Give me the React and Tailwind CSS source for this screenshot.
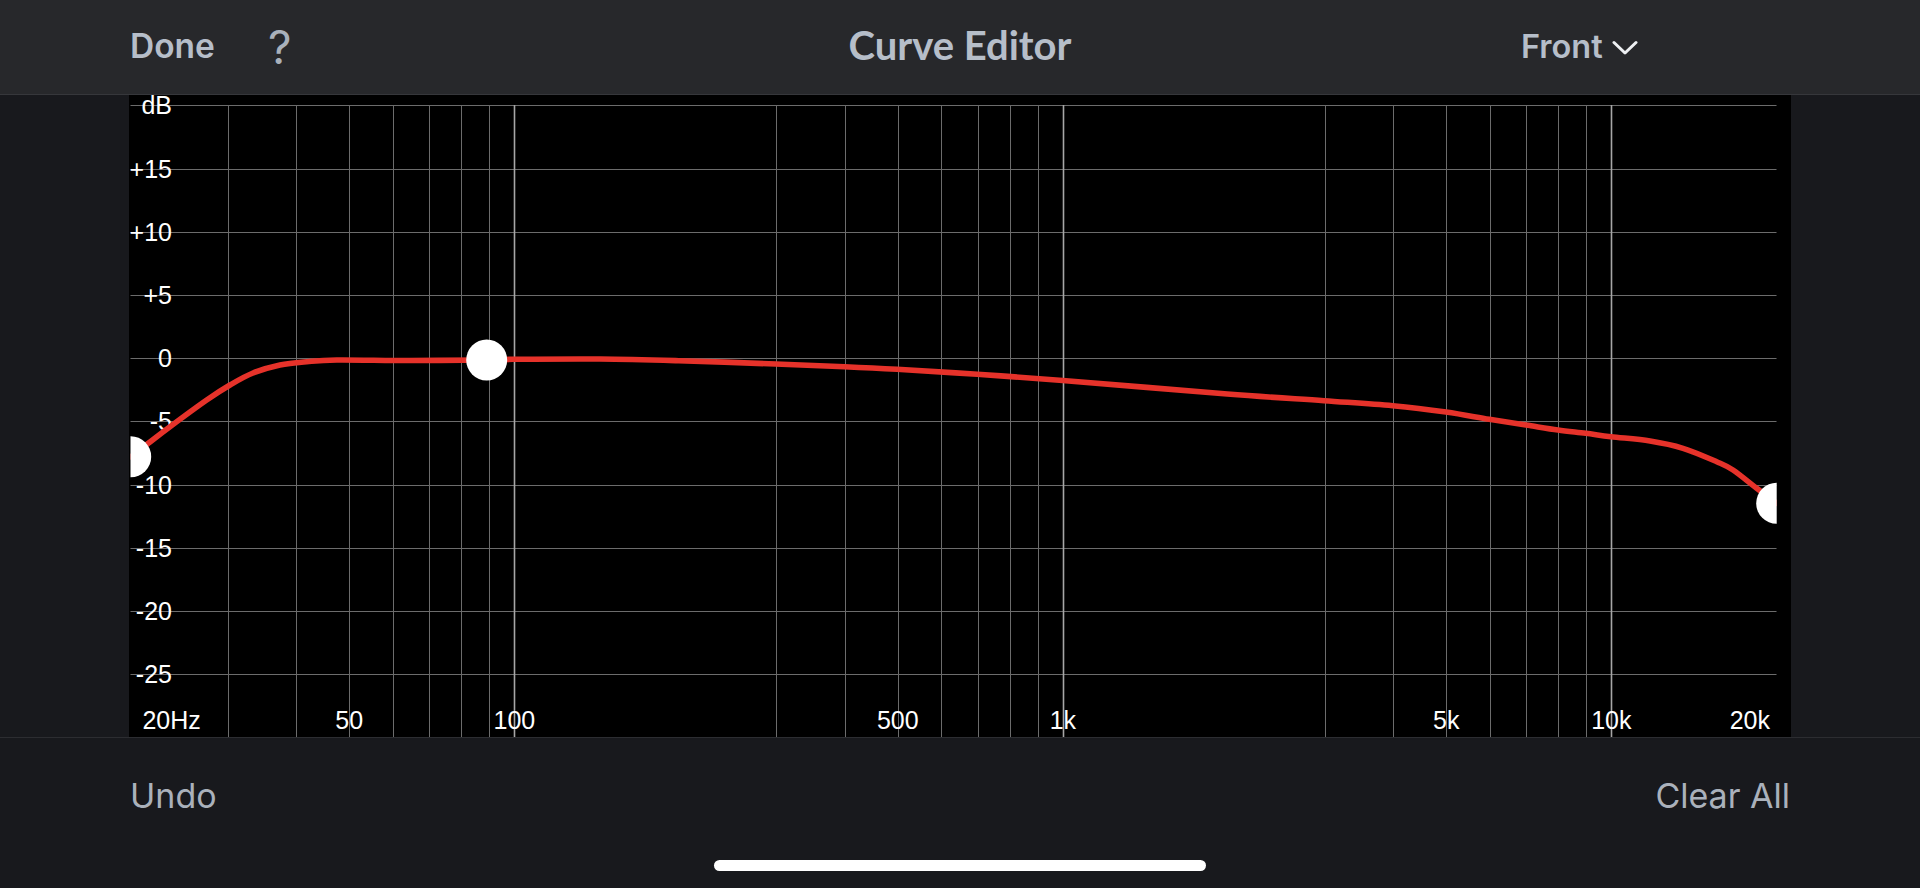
import React from "react";

const W = 1662;
const H = 642;
const fx = (f) => 2 + 548.5 * Math.log10(f / 20);
const dbY = (k) => 10.3 + 63.2 * k;
const dbLabels = ["dB", "+15", "+10", "+5", "0", "-5", "-10", "-15", "-20", "-25"];

const freqs = [];
[10, 100, 1000].forEach((m) => {
  for (let i = 3; i <= 10; i++) {
    freqs.push(i * m);
  }
});
const decades = new Set([100, 1000, 10000]);

const xLabels = [
  { t: "50", f: 50 },
  { t: "100", f: 100 },
  { t: "500", f: 500 },
  { t: "1k", f: 1000 },
  { t: "5k", f: 5000 },
  { t: "10k", f: 10000 },
];

const curve = [
  [2, 361.7],
  [19.3, 348.3],
  [41, 331.7],
  [77.7, 305],
  [101, 290],
  [124, 278],
  [151, 270],
  [177.7, 266.7],
  [207.7, 265],
  [281, 265.5],
  [357.7, 265],
  [384, 264.3],
  [471, 264],
  [549.7, 265.7],
  [646.7, 269],
  [715.7, 271.7],
  [768, 274.3],
  [848.3, 279.3],
  [933.7, 285.5],
  [1098.3, 299],
  [1195, 305.7],
  [1263.7, 310.7],
  [1317, 317],
  [1360.3, 324.3],
  [1397, 330],
  [1429, 335],
  [1456.7, 338.3],
  [1482, 341.7],
  [1521, 346],
  [1554, 353.3],
  [1587.7, 366.7],
  [1604, 375],
  [1627.7, 393.3],
  [1647.7, 408.3],
];

function smoothPath(pts) {
  let d = `M${pts[0][0]},${pts[0][1]}`;
  for (let i = 0; i < pts.length - 1; i++) {
    const p0 = pts[i - 1] || pts[i];
    const p1 = pts[i];
    const p2 = pts[i + 1];
    const p3 = pts[i + 2] || p2;
    const c1x = p1[0] + (p2[0] - p0[0]) / 6;
    const c1y = p1[1] + (p2[1] - p0[1]) / 6;
    const c2x = p2[0] - (p3[0] - p1[0]) / 6;
    const c2y = p2[1] - (p3[1] - p1[1]) / 6;
    d += ` C${c1x.toFixed(2)},${c1y.toFixed(2)} ${c2x.toFixed(2)},${c2y.toFixed(2)} ${p2[0]},${p2[1]}`;
  }
  return d;
}

function Chart() {
  const labelFont = { fontFamily: "'Liberation Sans', Arial, sans-serif", fontSize: 25 };
  return (
    <svg width={W} height={H} viewBox={`0 0 ${W} ${H}`} className="block overflow-visible">
      <defs>
        <clipPath id="plotclip">
          <rect x="1.5" y="0" width="1646.2" height={H} />
        </clipPath>
      </defs>
      {dbLabels.map((_, k) => {
        const y = Math.round(dbY(k)) + 0.5;
        return <line key={"h" + k} x1="1.5" x2="1647.5" y1={y} y2={y} stroke="#6c6c6c" strokeWidth="1" />;
      })}
      {freqs.map((f) => {
        const x = Math.round(fx(f)) + 0.5;
        const dec = decades.has(f);
        return (
          <line
            key={"v" + f}
            x1={x}
            x2={x}
            y1={Math.round(dbY(0))}
            y2={H}
            stroke={dec ? "#a6a6a6" : "#6c6c6c"}
            strokeWidth={dec ? 1.6 : 1}
          />
        );
      })}
      {dbLabels.map((t, k) => (
        <text key={"l" + k} x="43" y={dbY(k) + (k === 0 ? 8.5 : 9)} textAnchor="end" fill="#ffffff" style={labelFont}>
          {t}
        </text>
      ))}
      <text x="13.4" y="634.3" textAnchor="start" fill="#ffffff" style={labelFont}>
        20Hz
      </text>
      {xLabels.map((l) => (
        <text key={l.t} x={fx(l.f)} y="634.3" textAnchor="middle" fill="#ffffff" style={labelFont}>
          {l.t}
        </text>
      ))}
      <text x="1641" y="634.3" textAnchor="end" fill="#ffffff" style={labelFont}>
        20k
      </text>
      <g clipPath="url(#plotclip)">
        <path d={smoothPath(curve)} fill="none" stroke="#e6322a" strokeWidth="5.6" strokeLinecap="round" strokeLinejoin="round" />
        <circle cx="1.7" cy="361.7" r="20.5" fill="#ffffff" />
        <circle cx="357.7" cy="265" r="20.5" fill="#ffffff" />
        <circle cx="1647.7" cy="408.3" r="20.5" fill="#ffffff" />
      </g>
    </svg>
  );
}

export default function App() {
  return (
    <div className="flex h-[888px] w-[1920px] flex-col overflow-hidden bg-[#18191d]">
      <header className="flex h-[95px] shrink-0 items-center border-b border-[#36373b] bg-[#27282b] px-[130px]">
        <div className="flex w-[430px] items-center">
          <span className="font-['Inter',sans-serif] text-[33.5px] font-semibold leading-none text-[#b6bec9]">Done</span>
          <span className="ml-[53px] font-['Inter',sans-serif] text-[46px] font-normal leading-none text-[#a9b1bb]">?</span>
        </div>
        <div className="mb-[4px] flex-1 text-center font-['Lato',sans-serif] text-[40px] font-bold leading-none text-[#b6bec9]">
          Curve Editor
        </div>
        <div className="flex w-[430px] items-center pl-[161px]">
          <span className="font-['Inter',sans-serif] text-[32.5px] font-semibold leading-none text-[#b6bec9]">Front</span>
          <svg width="26" height="16" viewBox="0 0 26 16" className="ml-[9px] mt-[2px]">
            <polyline points="2,2.5 13,13 24,2.5" fill="none" stroke="#eef0f3" strokeWidth="3" strokeLinecap="round" strokeLinejoin="round" />
          </svg>
        </div>
      </header>
      <div className="mx-[129px] h-[642px] shrink-0 bg-black">
        <Chart />
      </div>
      <footer className="flex flex-1 flex-col border-t border-[#2c2d31] px-[130px]">
        <div className="flex justify-between pt-[41px] font-['Inter',sans-serif] text-[34px] leading-none text-[#aab1bb]">
          <span>Undo</span>
          <span>Clear All</span>
        </div>
        <div className="mb-[17px] mt-auto flex justify-center">
          <div className="h-[11px] w-[492px] rounded-full bg-white" />
        </div>
      </footer>
    </div>
  );
}
